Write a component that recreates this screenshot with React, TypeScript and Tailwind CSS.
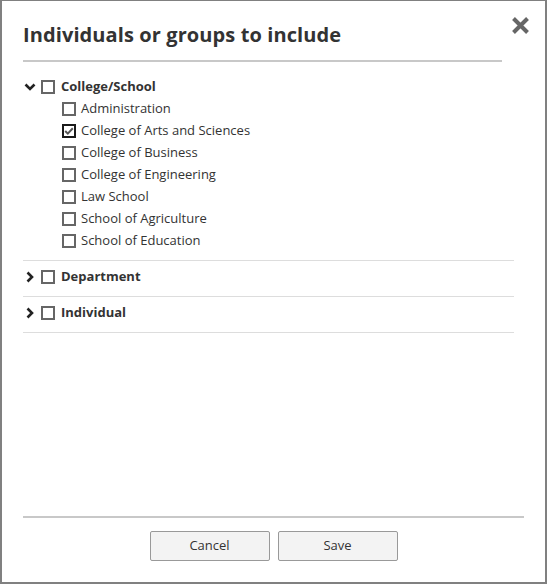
import React from 'react';

const font = { fontFamily: '"Open Sans", "Noto Sans", sans-serif' };

const schools = [
  { label: 'Administration', checked: false },
  { label: 'College of Arts and Sciences', checked: true },
  { label: 'College of Business', checked: false },
  { label: 'College of Engineering', checked: false },
  { label: 'Law School', checked: false },
  { label: 'School of Agriculture', checked: false },
  { label: 'School of Education', checked: false },
];

function Checkbox({ checked = false }: { checked?: boolean }) {
  return (
    <span
      className={
        'inline-flex items-center justify-center w-[14px] h-[14px] bg-white border-2 ' +
        (checked ? 'border-[#1a1a1a]' : 'border-[#666]')
      }
    >
      {checked && (
        <svg width="10" height="10" viewBox="0 0 10 10">
          <path d="M1.2 5 L3.8 7.6 L8.8 2.2" fill="none" stroke="#555" strokeWidth="2" />
        </svg>
      )}
    </span>
  );
}

function Chevron({ open }: { open: boolean }) {
  return (
    <span className="w-[14px] h-[14px] inline-flex items-center justify-center">
      {open ? (
        <svg width="12" height="8" viewBox="0 0 12 8">
          <path d="M1.5 1.5 L6 6 L10.5 1.5" fill="none" stroke="#222" strokeWidth="2.6" />
        </svg>
      ) : (
        <svg width="8" height="12" viewBox="0 0 8 12">
          <path d="M1.5 1.5 L6 6 L1.5 10.5" fill="none" stroke="#222" strokeWidth="2.6" />
        </svg>
      )}
    </span>
  );
}

function GroupRow({ label, open }: { label: string; open: boolean }) {
  return (
    <div className="flex items-center h-[22px] gap-[4px]">
      <Chevron open={open} />
      <Checkbox />
      <span className="ml-[2px] text-[13px] font-bold text-[#333]">{label}</span>
    </div>
  );
}

export default function App() {
  return (
    <div
      className="w-[547px] h-[584px] bg-white border-x-2 border-b-2 border-t border-[#808080] flex flex-col"
      style={font}
    >
      <div className="relative px-[21px] pt-[20px]">
        <h2 className="text-[20px] leading-[28px] font-bold text-[#333] tracking-[0.1px]">
          Individuals or groups to include
        </h2>
        <button className="absolute right-[15px] top-[14px] w-[20px] h-[20px] flex items-center justify-center">
          <svg width="19" height="19" viewBox="0 0 19 19">
            <path d="M2.5 2.5 L16.5 16.5 M16.5 2.5 L2.5 16.5" stroke="#666" strokeWidth="4" />
          </svg>
        </button>
        <div className="mt-[11px] h-[2px] bg-[#c8c8c8] mr-[22px]" />
      </div>

      <div className="flex-1 pl-[21px] pr-[31px]">
        <div className="pt-[14px] pb-[8px] border-b border-[#ddd]">
          <GroupRow label="College/School" open />
          <div className="pl-[39px]">
            {schools.map((s) => (
              <div key={s.label} className="flex items-center h-[22px] gap-[5px]">
                <Checkbox checked={s.checked} />
                <span className="text-[13px] text-[#333]">{s.label}</span>
              </div>
            ))}
          </div>
        </div>
        <div className="pt-[5px] pb-[8px] border-b border-[#ddd]">
          <GroupRow label="Department" open={false} />
        </div>
        <div className="pt-[5px] pb-[8px] border-b border-[#ddd]">
          <GroupRow label="Individual" open={false} />
        </div>
      </div>

      <div className="px-[21px]">
        <div className="h-[2px] bg-[#c8c8c8]" />
        <div className="flex justify-center gap-[8px] pt-[13px] pb-[21px]">
          <button className="w-[120px] h-[30px] bg-[#f3f3f3] border border-[#999] rounded-[2px] text-[13px] text-[#333]">
            Cancel
          </button>
          <button className="w-[120px] h-[30px] bg-[#f3f3f3] border border-[#999] rounded-[2px] text-[13px] text-[#333]">
            Save
          </button>
        </div>
      </div>
    </div>
  );
}
